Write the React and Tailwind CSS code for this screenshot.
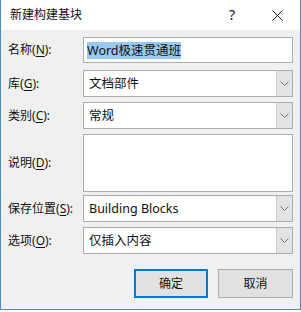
import React from "react";

const font = { fontFamily: '"Noto Sans", "Noto Sans CJK SC", sans-serif' };

function Chevron() {
  return (
    <svg width="9" height="5" viewBox="0 0 9 5" fill="none">
      <polyline points="0.5,0.5 4.5,4.5 8.5,0.5" stroke="#707070" strokeWidth="1" />
    </svg>
  );
}

function Label({ text, k, tail }) {
  return (
    <div className="w-[75px] shrink-0 text-[12px] leading-[16px] text-[#111]">
      {text}(<span className="underline underline-offset-2">{k}</span>){tail || ":"}
    </div>
  );
}

function Select({ value }) {
  return (
    <div className="flex h-[27px] w-[210px] border border-[#acacac] bg-white">
      <div className="flex flex-1 items-center pl-[5px] text-[12.5px] leading-[16px] text-[#111]">{value}</div>
      <div className="flex w-[16px] items-center justify-center border-l border-[#c8c8c8] bg-[#e3e3e3]">
        <Chevron />
      </div>
    </div>
  );
}

export default function App() {
  return (
    <div style={font} className="w-[301px] h-[312px] bg-white">
      <div className="flex h-[310px] w-[301px] flex-col border-x border-b border-[#4a8ccb] bg-[#f0f0f0]">
        <div className="flex h-[30px] items-center bg-white pl-[9px]">
          <span className="text-[12px] leading-[16px] text-[#111]">新建构建基块</span>
          <span className="ml-[147px] text-[14px] leading-[16px] text-[#111]">?</span>
          <svg className="ml-[37px]" width="11" height="11" viewBox="0 0 11 11">
            <path d="M0.5 0.5 L10.5 10.5 M10.5 0.5 L0.5 10.5" stroke="#222" strokeWidth="1" />
          </svg>
        </div>
        <div className="flex flex-col pl-[7px]">
          <div className="mt-[7px] flex items-center">
            <Label text="名称" k="N" />
            <div className="flex h-[26px] w-[210px] items-center border border-[#acacac] bg-white pl-[3px]">
              <span className="bg-[#99c9ef] text-[12.5px] leading-[17px] text-[#111]">Word极速贯通班</span>
            </div>
          </div>
          <div className="mt-[7px] flex items-center">
            <Label text="库" k="G" />
            <Select value="文档部件" />
          </div>
          <div className="mt-[5px] flex items-center">
            <Label text="类别" k="C" />
            <Select value="常规" />
          </div>
          <div className="mt-[5px] flex items-center">
            <Label text="说明" k="D" />
            <div className="h-[58px] w-[210px] border border-[#acacac] bg-white" />
          </div>
          <div className="mt-[3px] flex items-center">
            <Label text="保存位置" k="S" />
            <Select value="Building Blocks" />
          </div>
          <div className="mt-[5px] flex items-center">
            <Label text="选项" k="O" />
            <Select value="仅插入内容" />
          </div>
          <div className="mt-[15px] flex">
            <div className="ml-[126px] flex h-[29px] w-[74px] items-center justify-center border-2 border-[#0078d7] bg-[#e1e1e1] text-[12px] leading-[16px] text-[#111]">
              确定
            </div>
            <div className="ml-[10px] flex h-[29px] w-[75px] items-center justify-center border border-[#adadad] bg-[#e1e1e1] text-[12px] leading-[16px] text-[#111]">
              取消
            </div>
          </div>
        </div>
      </div>
    </div>
  );
}
